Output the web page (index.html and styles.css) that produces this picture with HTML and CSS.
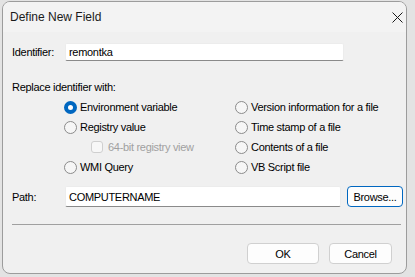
FILE: index.html
```html
<!DOCTYPE html>
<html lang="en">
<head>
    <meta charset="UTF-8">
    <meta name="viewport" content="width=device-width, initial-scale=1.0">
    <title>Define New Field</title>
    <link rel="stylesheet" href="styles.css">
</head>
<body>

    <div class="window">
        <div class="titlebar">
            <span class="title">Define New Field</span>
            <svg class="close" width="11" height="11" viewBox="0 0 11 11">
                <path d="M0.5 0.5 L10.5 10.5 M10.5 0.5 L0.5 10.5" stroke="#1a1a1a" stroke-width="1"/>
            </svg>
        </div>

        <div class="content">
            <div class="field-row">
                <label class="field-label">Identifier:</label>
                <div class="textbox id-box">remontka</div>
            </div>

            <div class="group-label">Replace identifier with:</div>

            <!-- opciones en dos columnas -->
            <div class="options">
                <div class="option"><span class="radio checked"></span>Environment variable</div>
                <div class="option"><span class="radio"></span>Version information for a file</div>
                <div class="option"><span class="radio"></span>Registry value</div>
                <div class="option"><span class="radio"></span>Time stamp of a file</div>
                <div class="option sub disabled"><span class="check"></span>64-bit registry view</div>
                <div class="option"><span class="radio"></span>Contents of a file</div>
                <div class="option"><span class="radio"></span>WMI Query</div>
                <div class="option"><span class="radio"></span>VB Script file</div>
            </div>

            <div class="field-row path-row">
                <label class="field-label">Path:</label>
                <div class="textbox path-box">COMPUTERNAME</div>
                <button type="button" class="btn browse">Browse...</button>
            </div>

            <div class="separator"></div>

            <div class="actions">
                <button type="button" class="btn ok">OK</button>
                <button type="button" class="btn cancel">Cancel</button>
            </div>
        </div>
    </div>

</body>
</html>
```

FILE: styles.css
```css
body {
    margin: 0;
    background-color: #e3e3e3;
    font-family: "Liberation Sans", Arial, sans-serif;
    font-size: 11px;
    letter-spacing: -0.3px;
    color: #000;
}
.window {
    box-sizing: border-box;
    width: 405px;
    height: 273px;
    margin: 1px 0 0 2px;
    border: 1px solid #9c9c9c;
    border-radius: 8px;
    background-color: #f0f0f0;
    overflow: hidden;
}
.titlebar {
    height: 30px;
    display: flex;
    align-items: center;
    justify-content: space-between;
    padding: 0 2px 0 7px;
    background-color: #f3f3f3;
}
.title {
    font-size: 12px;
    letter-spacing: 0;
    color: #1a1a1a;
}
.close {
    margin-right: 1px;
}
.content {
    padding: 11px 0 0 9px;
}
.field-row {
    display: flex;
    align-items: center;
    height: 18px;
}
.field-label {
    width: 53px;
}
.textbox {
    box-sizing: border-box;
    height: 18px;
    padding: 0 3px;
    line-height: 17px;
    background-color: #fff;
    border: 1px solid #ececec;
    border-bottom-color: #8a8a8a;
    border-radius: 2px;
}
.id-box {
    width: 279px;
}
.group-label {
    margin-top: 20px;
    line-height: 13px;
}
.options {
    display: grid;
    grid-template-columns: 171px auto;
    grid-auto-rows: 20px;
    margin: 3px 0 0 52px;
}
.option {
    display: flex;
    align-items: center;
    gap: 3px;
}
.option.sub {
    padding-left: 27px;
}
.disabled {
    color: #a0a0a0;
}
.radio {
    box-sizing: border-box;
    width: 13px;
    height: 13px;
    border: 1px solid #8b8b8b;
    border-radius: 50%;
    background-color: #f6f6f6;
}
.radio.checked {
    border: 4px solid #0067c0;
    background-color: #fff;
}
.check {
    box-sizing: border-box;
    width: 12px;
    height: 12px;
    margin-right: 2px;
    border: 1px solid #cfcfcf;
    border-radius: 3px;
    background-color: #f7f7f7;
}
.path-row {
    height: 21px;
    margin-top: 9px;
}
.path-box {
    width: 276px;
    height: 21px;
    line-height: 20px;
}
.btn {
    box-sizing: border-box;
    height: 21px;
    padding: 0;
    font-family: "Liberation Sans", Arial, sans-serif;
    font-size: 11px;
    letter-spacing: -0.3px;
    color: #000;
    background-color: #fdfdfd;
    border: 1px solid #d0d0d0;
    border-radius: 4px;
}
.browse {
    width: 56px;
    margin-left: 6px;
    border-color: #0067c0;
}
.separator {
    width: 389px;
    height: 1px;
    margin-top: 17px;
    background-color: #a0a0a0;
}
.actions {
    display: flex;
    gap: 10px;
    margin: 18px 0 0 235px;
}
.ok {
    width: 72px;
}
.cancel {
    width: 63px;
}
```
